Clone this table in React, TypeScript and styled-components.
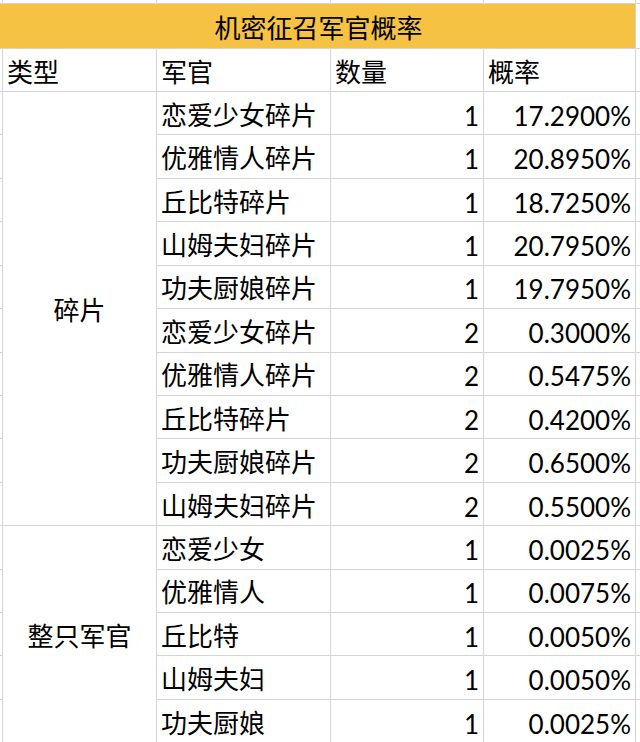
import { Fragment } from "react";
import styled, { createGlobalStyle } from "styled-components";

const GlobalStyle = createGlobalStyle`
  html, body {
    margin: 0;
    padding: 0;
    background: #ffffff;
  }
  body {
    width: 640px;
    height: 742px;
    overflow: hidden;
  }
`;

const Sheet = styled.div`
  width: 640px;
  height: 742px;
  overflow: hidden;
  background: #ffffff;
`;

const Grid = styled.div`
  display: grid;
  grid-template-columns: 2px 153px 173px 152px 151px 1fr;
  grid-template-rows: 3px 44px 42px repeat(15, 42.43px);
  gap: 1px;
  background: #d4d4d4;
`;

const Cell = styled.div`
  background: #ffffff;
  display: flex;
  align-items: center;
  min-width: 0;
  overflow: hidden;
  white-space: nowrap;
  color: #000000;
`;

const Title = styled(Cell)`
  grid-column: 1 / 6;
  background: #f5c244;
  justify-content: center;
  font-family: "Noto Sans CJK SC", sans-serif;
  font-size: 26px;
  padding-left: 2px;
`;

const Text = styled(Cell)`
  font-family: "Noto Sans CJK SC", sans-serif;
  font-size: 26px;
  padding-left: 4px;
`;

const Group = styled(Cell)<{ $span: number }>`
  grid-row: span ${(p) => p.$span};
  justify-content: center;
  font-family: "Noto Sans CJK SC", sans-serif;
  font-size: 26px;
`;

const Num = styled(Cell)`
  justify-content: flex-end;
  font-family: Lato, "Liberation Sans", sans-serif;
  font-size: 26px;
  padding: 5px 4px 0 0;
`;

type Row = { name: string; qty: number; rate: string };

const shards: Row[] = [
  { name: "恋爱少女碎片", qty: 1, rate: "17.2900%" },
  { name: "优雅情人碎片", qty: 1, rate: "20.8950%" },
  { name: "丘比特碎片", qty: 1, rate: "18.7250%" },
  { name: "山姆夫妇碎片", qty: 1, rate: "20.7950%" },
  { name: "功夫厨娘碎片", qty: 1, rate: "19.7950%" },
  { name: "恋爱少女碎片", qty: 2, rate: "0.3000%" },
  { name: "优雅情人碎片", qty: 2, rate: "0.5475%" },
  { name: "丘比特碎片", qty: 2, rate: "0.4200%" },
  { name: "功夫厨娘碎片", qty: 2, rate: "0.6500%" },
  { name: "山姆夫妇碎片", qty: 2, rate: "0.5500%" },
];

const officers: Row[] = [
  { name: "恋爱少女", qty: 1, rate: "0.0025%" },
  { name: "优雅情人", qty: 1, rate: "0.0075%" },
  { name: "丘比特", qty: 1, rate: "0.0050%" },
  { name: "山姆夫妇", qty: 1, rate: "0.0050%" },
  { name: "功夫厨娘", qty: 1, rate: "0.0025%" },
];

function Section({ label, rows }: { label: string; rows: Row[] }) {
  return (
    <>
      {rows.map((r, i) => (
        <Fragment key={i}>
          <Cell />
          {i === 0 && <Group $span={rows.length}>{label}</Group>}
          <Text>{r.name}</Text>
          <Num>{r.qty}</Num>
          <Num>{r.rate}</Num>
          <Cell />
        </Fragment>
      ))}
    </>
  );
}

export default function App() {
  return (
    <Sheet>
      <GlobalStyle />
      <Grid>
        {[0, 1, 2, 3, 4, 5].map((i) => (
          <Cell key={i} />
        ))}
        <Title>机密征召军官概率</Title>
        <Cell />
        <Cell />
        <Text>类型</Text>
        <Text>军官</Text>
        <Text>数量</Text>
        <Text>概率</Text>
        <Cell />
        <Section label="碎片" rows={shards} />
        <Section label="整只军官" rows={officers} />
      </Grid>
    </Sheet>
  );
}
